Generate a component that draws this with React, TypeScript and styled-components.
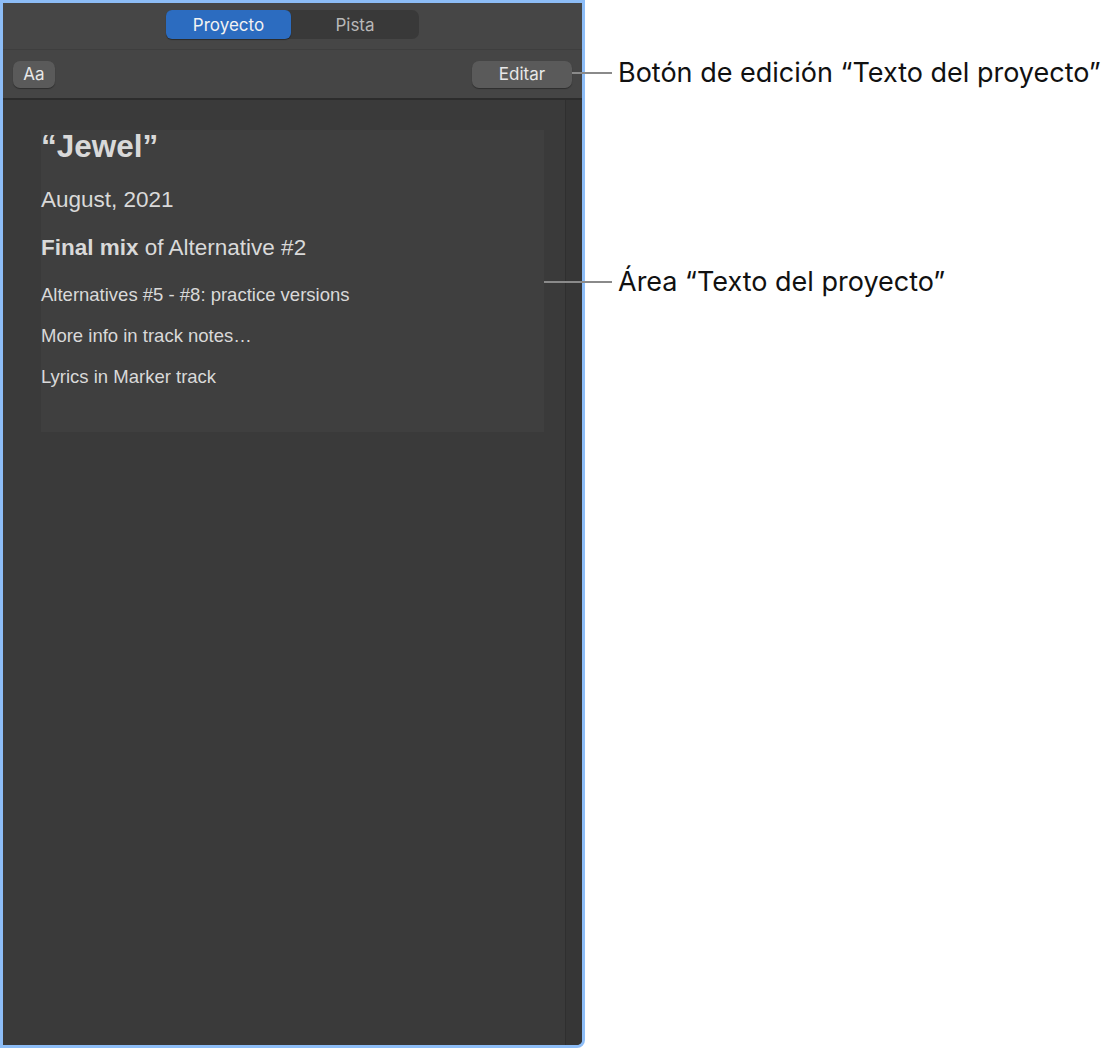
import styled, { createGlobalStyle } from 'styled-components';

const GlobalStyle = createGlobalStyle`
    html, body {
        margin: 0;
        padding: 0;
        background: #ffffff;
    }
`;

const Page = styled.div`
    display: flex;
    align-items: flex-start;
    width: 1120px;
    height: 1051px;
    overflow: hidden;
`;

const Panel = styled.div`
    width: 579px;
    height: 1042px;
    border: 3px solid #8dbdf7;
    border-bottom-right-radius: 8px;
    display: flex;
    flex-direction: column;
    background: #3a3a3a;
    overflow: hidden;
    font-family: "Liberation Sans", Arial, sans-serif;
`;

const TopBar = styled.div`
    height: 47px;
    background: #464646;
    border-bottom: 1px solid #3e3e3e;
    display: flex;
    justify-content: center;
    padding-top: 7px;
    box-sizing: border-box;
`;

const Segmented = styled.div`
    display: flex;
    width: 253px;
    height: 29px;
    border-radius: 7px;
    background: #393939;
    box-sizing: border-box;
`;

const Segment = styled.div<{ $active?: boolean }>`
    flex: ${p => (p.$active ? '0 0 125px' : '1')};
    display: flex;
    align-items: center;
    justify-content: center;
    border-radius: 6px;
    background: ${p => (p.$active ? '#2c6cc0' : 'transparent')};
    box-shadow: ${p => (p.$active ? '0 1px 1px rgba(0,0,0,0.4)' : 'none')};
    color: ${p => (p.$active ? '#f2f2f2' : '#b8b8b8')};
    font-family: Inter, "Noto Sans", sans-serif;
    font-size: 17px;
`;

const Toolbar = styled.div`
    height: 50px;
    background: #454545;
    border-bottom: 2px solid #2c2c2c;
    display: flex;
    align-items: center;
    justify-content: space-between;
    padding: 0 10px;
    box-sizing: border-box;
`;

const ToolButton = styled.div<{ $width: number }>`
    width: ${p => p.$width}px;
    height: 27px;
    border-radius: 7px;
    background: #5a5a5a;
    box-shadow: 0 1px 1px rgba(0, 0, 0, 0.35);
    color: #e8e8e8;
    font-family: Inter, "Noto Sans", sans-serif;
    font-size: 17px;
    display: flex;
    align-items: center;
    justify-content: center;
`;

const Body = styled.div`
    flex: 1;
    display: flex;
`;

const TextColumn = styled.div`
    flex: 1;
    padding: 30px 21px 0 38px;
`;

const ScrollTrack = styled.div`
    width: 16px;
    background: #363636;
    border-left: 1px solid #2f2f2f;
`;

const TextArea = styled.div`
    height: 302px;
    background: #3f3f3f;
    color: #d9d9d9;
    box-sizing: border-box;
`;

const Title = styled.div`
    font-size: 31.5px;
    font-weight: bold;
    line-height: 32px;
`;

const Line = styled.div<{ $size: number; $height: number; $top: number }>`
    font-size: ${p => p.$size}px;
    line-height: ${p => p.$height}px;
    margin-top: ${p => p.$top}px;
    white-space: nowrap;
`;

const Callouts = styled.div`
    display: flex;
    flex-direction: column;
`;

const Callout = styled.div<{ $top: number; $lead: number }>`
    display: flex;
    align-items: center;
    margin-top: ${p => p.$top}px;
    margin-left: -${p => p.$lead}px;
    position: relative;
    z-index: 1;
`;

const Leader = styled.div<{ $len: number }>`
    width: ${p => p.$len}px;
    height: 2px;
    background: #8a8a8a;
    margin-right: 6px;
`;

const CalloutText = styled.div`
    font-family: Inter, "Noto Sans", sans-serif;
    font-size: 27px;
    color: #111111;
    white-space: nowrap;
    line-height: 32px;
`;

export default function App() {
    return (
        <>
            <GlobalStyle />
            <Page>
                <Panel>
                    <TopBar>
                        <Segmented>
                            <Segment $active>Proyecto</Segment>
                            <Segment>Pista</Segment>
                        </Segmented>
                    </TopBar>
                    <Toolbar>
                        <ToolButton $width={42}>Aa</ToolButton>
                        <ToolButton $width={100}>Editar</ToolButton>
                    </Toolbar>
                    <Body>
                        <TextColumn>
                            <TextArea>
                                <Title>“Jewel”</Title>
                                <Line $size={22.5} $height={26} $top={25}>August, 2021</Line>
                                <Line $size={22.5} $height={26} $top={22}>
                                    <b>Final mix</b> of Alternative #2
                                </Line>
                                <Line $size={18.5} $height={22} $top={23}>Alternatives #5 - #8: practice versions</Line>
                                <Line $size={18.5} $height={22} $top={19}>More info in track notes…</Line>
                                <Line $size={18.5} $height={22} $top={19}>Lyrics in Marker track</Line>
                            </TextArea>
                        </TextColumn>
                        <ScrollTrack />
                    </Body>
                </Panel>
                <Callouts>
                    <Callout $top={57} $lead={13}>
                        <Leader $len={40} />
                        <CalloutText>Botón de edición “Texto del proyecto”</CalloutText>
                    </Callout>
                    <Callout $top={177} $lead={41}>
                        <Leader $len={68} />
                        <CalloutText>Área “Texto del proyecto”</CalloutText>
                    </Callout>
                </Callouts>
            </Page>
        </>
    );
}
